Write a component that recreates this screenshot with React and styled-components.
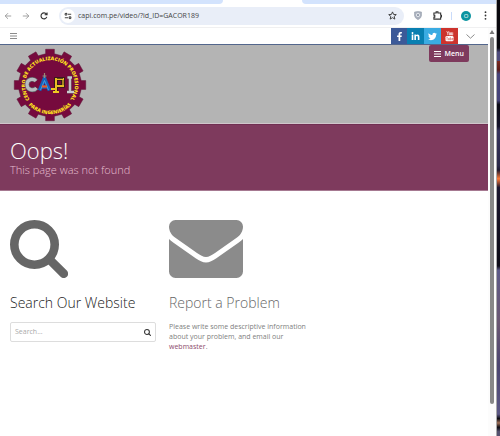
import React from "react";
import styled, { createGlobalStyle } from "styled-components";
import { FaFacebookF, FaLinkedinIn, FaTwitter } from "react-icons/fa";

const GlobalStyle = createGlobalStyle`
  * { box-sizing: border-box; }
  body { margin: 0; background: #fff; font-family: "Open Sans", "Noto Sans", sans-serif; color: #333; }
  button { border: 0; padding: 0; background: none; font: inherit; color: inherit; cursor: pointer; }
  svg { display: block; flex: none; }
  h1, h2, p { margin: 0; }
`;

const Desktop = styled.div`
  display: flex;
  min-height: 100vh;
`;
const Window = styled.div`
  flex: 1;
  min-width: 0;
  display: flex;
  flex-direction: column;
  border-right: 1px solid #aaa;
`;
const Wallpaper = styled.div`
  width: 3px;
  background: linear-gradient(
    #09080d 0, #09080d 11%, #4e4b7b 12%, #4e4b7b 14%, #7b2a20 14%, #5c1c18 16%,
    #47447a 17%, #47447a 23%, #0b0a14 24%, #16142b 29%, #37345c 30%, #2b294a 38%,
    #1d1930 39%, #ff7a38 41%, #1c1730 43%, #0e0c18 60%, #0e0c18 61%,
    #5d5a88 62%, #6c5873 74%, #4c4671 84%, #5c5885 95%, #0c0b12 96%, #a07058 97%, #0c0b12 98%, #55516f 99%
  );
`;
const TabStrip = styled.div`
  display: flex;
  height: 4px;
  background: #fff;
`;
const InactiveTabs = styled.div`
  flex: ${(p) => p.$grow};
  background: #d3e3fd;
  border-radius: ${(p) => (p.$side === "left" ? "0 0 4px 0" : "0 0 0 4px")};
`;
const ActiveTab = styled.div`
  flex: 79;
`;
const Toolbar = styled.div`
  display: flex;
  align-items: center;
  height: 24px;
  padding: 0 6px 0 3px;
  border-bottom: 1px solid #f0f0f1;
  color: #444;
`;
const NavButtons = styled.div`
  display: flex;
  gap: 8px;
  margin-right: 10px;
`;
const ToolButton = styled.button`
  display: grid;
  place-items: center;
  width: 10px;
  height: 16px;
  color: ${(p) => (p.$muted ? "#8c8c8c" : "#333")};
`;
const AddressBar = styled.div`
  flex: 1;
  min-width: 0;
  display: flex;
  align-items: center;
  height: 18px;
  padding: 0 7px 0 2px;
  border-radius: 9px;
  background: #e9eef8;
`;
const SiteInfo = styled.button`
  display: grid;
  place-items: center;
  width: 14px;
  height: 14px;
  border-radius: 50%;
  background: #fff;
`;
const Address = styled.input`
  flex: 1;
  min-width: 0;
  border: 0;
  padding: 0 0 0 3px;
  background: none;
  color: #444;
  outline: 0;
  font: 7px/16px "Open Sans", "Noto Sans", sans-serif;
`;
const Extensions = styled.div`
  display: flex;
  align-items: center;
  gap: 9px;
  margin-left: 9px;
`;
const Divider = styled.span`
  width: 1px;
  height: 8px;
  background: #c9dbfa;
`;
const Avatar = styled.button`
  width: 10px;
  height: 10px;
  border-radius: 50%;
  background: #0b94a0;
  color: #fff;
  font-size: 6px;
  line-height: 10px;
`;
const Viewport = styled.div`
  flex: 1;
  display: flex;
`;
const Page = styled.div`
  flex: 1;
  min-width: 0;
`;
const Scrollbar = styled.div`
  width: 8px;
  display: flex;
  flex-direction: column;
  align-items: center;
  background: #fcfcfc;
`;
const Thumb = styled.div`
  width: 4px;
  flex: 367;
  margin-top: 3px;
  border-radius: 2px;
  background: #888;
`;
const Track = styled.div`
  flex: 32;
`;
const TopBar = styled.div`
  display: flex;
  align-items: center;
  justify-content: space-between;
  height: 17px;
  padding: 0 13px 0 8px;
  border-bottom: 1px solid #53668c;
`;
const TopBarEnd = styled.div`
  display: flex;
  align-items: center;
  gap: 7px;
`;
const SocialLinks = styled.div`
  display: flex;
`;
const SocialLink = styled.a`
  display: grid;
  place-items: center;
  width: ${(p) => (p.$narrow ? "16px" : "17px")};
  height: 16px;
  background: ${(p) => p.$color};
  color: #fff;
`;
const Header = styled.header`
  display: flex;
  justify-content: space-between;
  align-items: flex-start;
  height: 79px;
  padding: 0 19px 0 13px;
  background: #b4b4b4;
  border-bottom: 1px solid #d0c6cb;
`;
const HomeLink = styled.a`
  display: block;
  padding-top: 3px;
`;
const MenuButton = styled.button`
  display: flex;
  align-items: center;
  gap: 4px;
  height: 17px;
  padding: 0 5px 0 4px;
  border-radius: 2px;
  background: #7e3a5d;
  color: #fff;
  font-size: 7px;
  font-weight: 600;
`;
const Banner = styled.section`
  height: 67px;
  padding: 12px 10px 0;
  background: #7e3a5d;
  border-top: 1px solid #702f52;
  border-bottom: 1px solid #a67991;
`;
const BannerTitle = styled.h1`
  color: #fff;
  font-size: 22px;
  font-weight: 300;
  line-height: 26px;
`;
const BannerText = styled.p`
  color: #e6bfd0;
  font-size: 11px;
  font-weight: 300;
  line-height: 14px;
`;
const Columns = styled.main`
  display: grid;
  grid-template-columns: repeat(3, 1fr);
  column-gap: 13px;
  padding: 29px 14px 29px 10px;
`;
const Column = styled.section`
  display: flex;
  flex-direction: column;
`;
const ColumnTitle = styled.h2`
  margin: 14px 0 8px;
  color: ${(p) => (p.$soft ? "#666" : "#222")};
  font-size: 14px;
  font-weight: 300;
  line-height: 22px;
  white-space: nowrap;
`;
const SearchForm = styled.form`
  display: flex;
  align-items: center;
  height: 20px;
  padding: 0 3px 0 4px;
  border: 1px solid #ddd;
  border-radius: 2px;
`;
const SearchInput = styled.input`
  flex: 1;
  min-width: 0;
  border: 0;
  padding: 0;
  outline: 0;
  background: none;
  font: 7px/14px "Open Sans", "Noto Sans", sans-serif;
  &::placeholder { color: #aaa; opacity: 1; }
`;
const BodyText = styled.p`
  color: #808080;
  font-size: 7px;
  line-height: 10px;
  white-space: nowrap;
`;
const TextLink = styled.a`
  color: #8d4a6c;
  text-decoration: none;
`;

const Stroke = ({ size = 10, width = 1, children }) => (
  <svg width={size} height={size} viewBox="0 0 10 10" fill="none" stroke="currentColor" strokeWidth={width} aria-hidden="true">
    {children}
  </svg>
);

const Bars = ({ size = 8 }) => (
  <svg width={size} height={size} viewBox="0 0 8 8" fill="none" stroke="currentColor" aria-hidden="true">
    <path d="M1 1.500h7M1 4h7M1 6.500h7" />
  </svg>
);

const Magnifier = ({ size }) => (
  <svg width={size} height={size} viewBox="0 0 58 58" fill="none" stroke="currentColor" aria-hidden="true">
    <circle cx="24.500" cy="24.500" r="20.200" strokeWidth="8.600" />
    <path d="M39.500 39.500 53.700 53.700" strokeWidth="8.800" strokeLinecap="round" />
  </svg>
);

const LargeMagnifier = styled.div`
  color: #666;
`;

const Envelope = () => (
  <svg width="74" height="58" viewBox="0 0 74 58" fill="#8b8b8b" aria-hidden="true">
    <path d="M6.500 0h61A6.500 6.500 0 0 1 74 6.500c0 4.700-2.500 8.500-6 11L46 33c-3.200 2.300-6.200 4-9 4s-5.800-1.700-9-4L6 17.500C2.500 15 0 11.200 0 6.500A6.500 6.500 0 0 1 6.500 0Z" />
    <path d="M0 19c1.200 1.300 2.600 2.500 4.200 3.600L27 38.500c3.300 2.300 6.600 4 10 4s6.700-1.700 10-4l22.800-15.900C71.400 21.500 72.800 20.300 74 19v32.500a6.500 6.500 0 0 1-6.500 6.500h-61A6.500 6.500 0 0 1 0 51.500Z" />
  </svg>
);

const YouTube = () => (
  <svg width="9" height="11" viewBox="0 0 9 11" fill="#fff" aria-hidden="true">
    <path d="m1.700 .2 1.100 2V4.200m1.100-4-1.100 2M4.400 1.700h1.100v2.300H4.400ZM6.500 1.300V4h1.200V1.300" fill="none" stroke="#fff" strokeWidth=".7" />
    <rect x=".5" y="5" width="8" height="5.300" rx="1.300" />
    <path d="M1.300 6.200h1.600M2.100 6.200v3M3.500 7v2h.9V7M5.300 6v3h.8V7.300h-.8M7.900 8.900h-.8V7.300h.7v.8h-.7" fill="none" stroke="#cd332d" strokeWidth=".4" />
  </svg>
);

const gearPath = (() => {
  const points = [];
  for (let i = 0; i < 12; i += 1) {
    [[-8, 31.5], [-7, 36], [7, 36], [8, 31.5]].forEach(([offset, radius]) => {
      const a = ((i * 30 + offset - 90) * Math.PI) / 180;
      points.push(`${37 + radius * Math.cos(a)} ${37 + radius * Math.sin(a)}`);
    });
  }
  return `M${points.join("L")}Z`;
})();

const Logo = () => (
  <svg width="74" height="74" viewBox="0 0 74 74" role="img" aria-label="CAPI">
    <path d={gearPath} fill="#760a3d" stroke="#5d1938" strokeWidth=".5" />
    <path id="upperArc" d="M19.500 54.500A24.800 24.800 0 1 1 54.500 54.500" fill="none" />
    <path id="lowerArc" d="M14 55A29.200 29.200 0 0 0 60 55" fill="none" />
    <g fill="#ffe11e" fontFamily="Open Sans, sans-serif" fontWeight="800" fontSize="5" textAnchor="middle">
      <text><textPath href="#upperArc" startOffset="50%">CENTRO DE ACTUALIZACIÓN PROFESIONAL</textPath></text>
      <text><textPath href="#lowerArc" startOffset="50%">PARA INGENIERÍAS</textPath></text>
    </g>
    <g fill="none">
      <path d="M23 33c-2.500-3-9-2-9 3.500s6.500 7 9.500 3.500" stroke="#63666b" strokeWidth="4.600" />
      <path d="M23 33c-2.500-3-9-2-9 3.500s6.500 7 9.500 3.500" stroke="#b8bcc0" strokeWidth="3.200" />
      <path d="m26.500 42.500 5-12 5 12M28 39h7" stroke="#1462b8" strokeWidth="3.600" />
      <path d="m27.500 42 4-9.500 4 9.500" stroke="#57a6e8" strokeWidth=".8" />
      <path d="M29 38.500h5" stroke="#ef5c25" strokeWidth="2.200" />
      <path d="M31.500 25v5M29.500 28h4" stroke="#9a8b78" strokeWidth="1.200" />
      <path d="M43 45V31h7v7h-7" stroke="#261d16" strokeWidth="3.600" />
      <path d="M43 44V31h7v7h-7" stroke="#e7bd24" strokeWidth="2" />
      <path d="M44 30.500h6M50 32v5" stroke="#3f301c" strokeWidth=".8" />
      <path d="M38 41h4M40 44h6" stroke="#f1ca21" strokeWidth="1.800" />
      <path d="M57 29v15M54.500 29.500H59M54 44h7" stroke="#777a7e" strokeWidth="3" />
      <path d="M57 29v15M54.500 29.500H59M54 44h7" stroke="#c9cbce" strokeWidth="1.800" />
    </g>
  </svg>
);

export default function App() {
  return (
    <>
      <GlobalStyle />
      <Desktop>
        <Window>
          <TabStrip>
            <InactiveTabs $grow={223} $side="left" />
            <ActiveTab />
            <InactiveTabs $grow={194} $side="right" />
          </TabStrip>
          <Toolbar>
            <NavButtons>
              <ToolButton $muted aria-label="Back"><Stroke size={8}><path d="M9 5H1.500M5 1.500 1.500 5 5 8.500" /></Stroke></ToolButton>
              <ToolButton $muted aria-label="Forward"><Stroke size={8}><path d="M1 5h7.500M5 1.500 8.500 5 5 8.500" /></Stroke></ToolButton>
              <ToolButton aria-label="Reload"><Stroke size={8} width={1.4}><path d="M8.500 6A3.700 3.700 0 1 1 8 2.700M8.800.5v3H5.800" /></Stroke></ToolButton>
            </NavButtons>
            <AddressBar>
              <SiteInfo aria-label="Site information">
                <Stroke size={8} width={1.3}><circle cx="2.500" cy="2.800" r="1.200" /><path d="M5 2.800h4M1 7.200h4" /><circle cx="7.500" cy="7.200" r="1.200" /></Stroke>
              </SiteInfo>
              <Address aria-label="Address" defaultValue="capi.com.pe/video/?id_ID=GACOR189" />
              <ToolButton aria-label="Bookmark this page"><Stroke size={9}><path d="m5 1 1.200 2.800 3 .2L6.900 6l.7 3L5 7.400 2.400 9l.7-3L.8 4l3-.2Z" /></Stroke></ToolButton>
            </AddressBar>
            <Extensions>
              <ToolButton $muted aria-label="Shield extension">
                <svg width="8" height="9" viewBox="0 0 8 9" aria-hidden="true"><path d="M.5 1 4 .4 7.500 1v3.800Q7 7.400 4 8.700 1 7.400.5 4.800Z" fill="#a9b0bc" stroke="#8f98a7" strokeWidth=".5" /><circle cx="4" cy="4" r="1.700" fill="none" stroke="#eef0f4" strokeWidth=".8" /><circle cx="4" cy="4" r=".6" fill="#667084" /></svg>
              </ToolButton>
              <ToolButton aria-label="Extensions"><Stroke size={9} width={1.2}><path d="M1 2.200h2.500V1h2v1.200h3v2.500h1v1.800h-1V9H1V6.800h1V4.700H1Z" /></Stroke></ToolButton>
              <Divider />
              <Avatar aria-label="Profile">O</Avatar>
              <ToolButton aria-label="Browser menu"><svg width="3" height="9" viewBox="0 0 3 9" fill="currentColor"><circle cx="1.500" cy="1.200" r=".9" /><circle cx="1.500" cy="4.500" r=".9" /><circle cx="1.500" cy="7.800" r=".9" /></svg></ToolButton>
            </Extensions>
          </Toolbar>
          <Viewport>
            <Page>
              <TopBar>
                <ToolButton $muted aria-label="Open navigation"><Bars /></ToolButton>
                <TopBarEnd>
                  <SocialLinks>
                    <SocialLink $narrow href="#facebook" aria-label="Facebook" $color="#3b5998"><FaFacebookF size={9} /></SocialLink>
                    <SocialLink href="#linkedin" aria-label="LinkedIn" $color="#087fb1"><FaLinkedinIn size={9} /></SocialLink>
                    <SocialLink href="#twitter" aria-label="Twitter" $color="#3aabe2"><FaTwitter size={9} /></SocialLink>
                    <SocialLink href="#youtube" aria-label="YouTube" $color="#cd332d"><YouTube /></SocialLink>
                  </SocialLinks>
                  <ToolButton $muted aria-label="Show more"><svg width="9" height="5" viewBox="0 0 9 5" fill="none" stroke="currentColor"><path d="m.5.5 4 3.700 4-3.700" /></svg></ToolButton>
                </TopBarEnd>
              </TopBar>
              <Header>
                <HomeLink href="#home" aria-label="CAPI home"><Logo /></HomeLink>
                <MenuButton><Bars />Menu</MenuButton>
              </Header>
              <Banner>
                <BannerTitle>Oops!</BannerTitle>
                <BannerText>This page was not found</BannerText>
              </Banner>
              <Columns>
                <Column>
                  <LargeMagnifier><Magnifier size={58} /></LargeMagnifier>
                  <ColumnTitle>Search Our Website</ColumnTitle>
                  <SearchForm onSubmit={(event) => event.preventDefault()}>
                    <SearchInput aria-label="Search" placeholder="Search..." />
                    <ToolButton type="submit" aria-label="Submit search"><Magnifier size={7} /></ToolButton>
                  </SearchForm>
                </Column>
                <Column>
                  <Envelope />
                  <ColumnTitle $soft>Report a Problem</ColumnTitle>
                  <BodyText>
                    Please write some descriptive information<br />
                    about your problem, and email our<br />
                    <TextLink href="#webmaster">webmaster</TextLink>.
                  </BodyText>
                </Column>
              </Columns>
            </Page>
            <Scrollbar>
              <svg width="6" height="6" viewBox="0 0 6 6" fill="#777" aria-hidden="true"><path d="m3 2 2.500 4h-5Z" /></svg>
              <Thumb />
              <Track />
            </Scrollbar>
          </Viewport>
        </Window>
        <Wallpaper />
      </Desktop>
    </>
  );
}
